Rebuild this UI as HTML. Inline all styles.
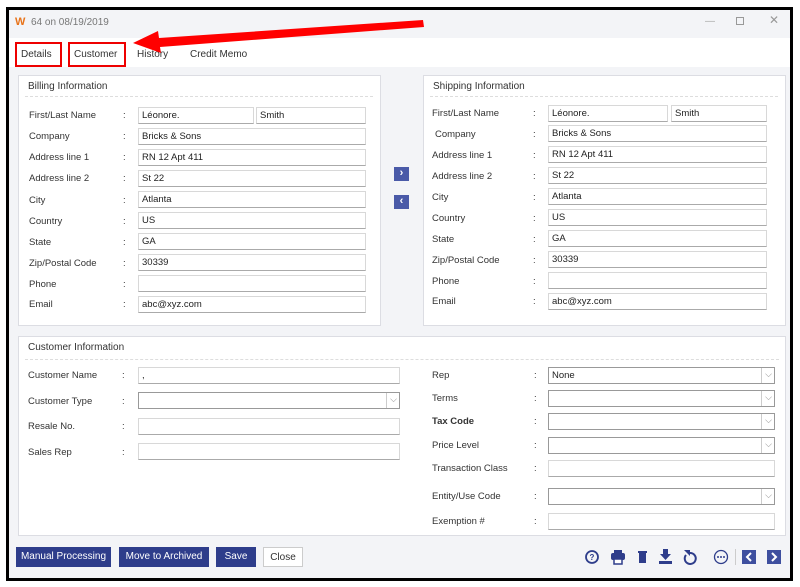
<!DOCTYPE html>
<html><head><meta charset="utf-8"><style>
*{box-sizing:border-box;margin:0;padding:0}
body{width:800px;height:587px;background:#fff;position:relative;overflow:hidden;font-family:"Liberation Sans","DejaVu Sans",sans-serif;font-size:9.5px;color:#333}
.a{position:absolute}
.win{left:6px;top:7px;width:787px;height:574px;border:3px solid #000;background:#f3f4f7}
.title{left:9px;top:10px;width:781px;height:28px;background:#f3f4f7;color:#777;font-size:10px}
.tabs{left:9px;top:38px;width:781px;height:29px;background:#fff}
.tab{font-size:10px;color:#333;top:49px}
.panel{background:#fff;border:1px solid #dcdde3}
.ph{font-size:10px;color:#333}
.dash{border-top:1px dashed #ddd;height:0}
.l{font-size:9.5px;color:#333;white-space:nowrap}
.c{font-size:9.5px;color:#333}
.i{background:#fff;border:1px solid #d8d8d8;border-bottom-color:#aaa;height:17px;font-size:9.5px;padding:2px 0 0 3px;color:#222}
.sel:after{content:"⌵";position:absolute;right:2px;top:1px;color:#888;font-size:9px}
.sel{border-color:#999}
.sel:before{content:"";position:absolute;right:12px;top:0;height:15px;border-left:1px solid #ccc}
.btn{background:#2e3d8b;color:#fff;font-size:10px;height:20px;text-align:center;padding-top:4px;top:547px;white-space:nowrap}
.ic{fill:#2e3d8b}
</style></head><body>
<div class="a win"></div>
<div class="a title"><span class="a" style="left:6px;top:6px;color:#e8731a;font-weight:bold;font-size:11px">W</span><span class="a" style="left:22px;top:7px">64 on 08/19/2019</span>
<span class="a" style="left:696px;top:6px;color:#aaa">—</span><span class="a" style="left:727px;top:7px;width:8px;height:8px;border:1px solid #999"></span><span class="a" style="left:760px;top:3px;color:#999;font-size:12px">✕</span></div>
<div class="a tabs"></div>
<span class="a tab" style="left:21px">Details</span>
<span class="a tab" style="left:74px">Customer</span>
<span class="a tab" style="left:137px">History</span>
<span class="a tab" style="left:190px">Credit Memo</span>
<div class="a" style="left:15px;top:42px;width:47px;height:25px;border:2px solid #e00"></div>
<div class="a" style="left:68px;top:42px;width:58px;height:25px;border:2px solid #e00"></div>
<svg class="a" style="left:0;top:0" width="800" height="587"><polygon points="423,20 424,27 160,47 161,53 133,43 158,31 159,38" fill="#f00"/></svg>

<div class="a panel" style="left:18px;top:75px;width:363px;height:251px"></div>
<div class="a ph" style="left:28px;top:81px">Billing Information</div>
<div class="a dash" style="left:25px;top:96px;width:348px"></div>
<div class="a panel" style="left:423px;top:75px;width:363px;height:251px"></div>
<div class="a ph" style="left:433px;top:81px">Shipping Information</div>
<div class="a dash" style="left:430px;top:96px;width:348px"></div>

<div class="a l" style="left:29px;top:110px">First/Last Name</div><div class="a c" style="left:123px;top:110px">:</div><div class="a i" style="left:138px;top:107px;width:116px">Léonore.</div><div class="a i" style="left:256px;top:107px;width:110px">Smith</div>
<div class="a l" style="left:29px;top:131px">Company</div><div class="a c" style="left:123px;top:131px">:</div><div class="a i" style="left:138px;top:128px;width:228px">Bricks &amp; Sons</div>
<div class="a l" style="left:29px;top:152px">Address line 1</div><div class="a c" style="left:123px;top:152px">:</div><div class="a i" style="left:138px;top:149px;width:228px">RN 12 Apt 411</div>
<div class="a l" style="left:29px;top:173px">Address line 2</div><div class="a c" style="left:123px;top:173px">:</div><div class="a i" style="left:138px;top:170px;width:228px">St 22</div>
<div class="a l" style="left:29px;top:195px">City</div><div class="a c" style="left:123px;top:195px">:</div><div class="a i" style="left:138px;top:191px;width:228px">Atlanta</div>
<div class="a l" style="left:29px;top:216px">Country</div><div class="a c" style="left:123px;top:216px">:</div><div class="a i" style="left:138px;top:212px;width:228px">US</div>
<div class="a l" style="left:29px;top:237px">State</div><div class="a c" style="left:123px;top:237px">:</div><div class="a i" style="left:138px;top:233px;width:228px">GA</div>
<div class="a l" style="left:29px;top:258px">Zip/Postal Code</div><div class="a c" style="left:123px;top:258px">:</div><div class="a i" style="left:138px;top:254px;width:228px">30339</div>
<div class="a l" style="left:29px;top:279px">Phone</div><div class="a c" style="left:123px;top:279px">:</div><div class="a i" style="left:138px;top:275px;width:228px"></div>
<div class="a l" style="left:29px;top:299px">Email</div><div class="a c" style="left:123px;top:299px">:</div><div class="a i" style="left:138px;top:296px;width:228px">abc@xyz.com</div>

<div class="a" style="left:394px;top:167px;width:15px;height:14px;background:#4a5aa8;color:#fff;font-size:11px;text-align:center;font-weight:bold;line-height:13px">›</div>
<div class="a" style="left:394px;top:195px;width:15px;height:14px;background:#4a5aa8;color:#fff;font-size:11px;text-align:center;font-weight:bold;line-height:13px">‹</div>

<div class="a l" style="left:432px;top:108px">First/Last Name</div><div class="a c" style="left:533px;top:108px">:</div><div class="a i" style="left:548px;top:105px;width:120px">Léonore.</div><div class="a i" style="left:671px;top:105px;width:96px">Smith</div>
<div class="a l" style="left:435px;top:129px">Company</div><div class="a c" style="left:533px;top:129px">:</div><div class="a i" style="left:548px;top:125px;width:219px">Bricks &amp; Sons</div>
<div class="a l" style="left:432px;top:150px">Address line 1</div><div class="a c" style="left:533px;top:150px">:</div><div class="a i" style="left:548px;top:146px;width:219px">RN 12 Apt 411</div>
<div class="a l" style="left:432px;top:171px">Address line 2</div><div class="a c" style="left:533px;top:171px">:</div><div class="a i" style="left:548px;top:167px;width:219px">St 22</div>
<div class="a l" style="left:432px;top:192px">City</div><div class="a c" style="left:533px;top:192px">:</div><div class="a i" style="left:548px;top:188px;width:219px">Atlanta</div>
<div class="a l" style="left:432px;top:213px">Country</div><div class="a c" style="left:533px;top:213px">:</div><div class="a i" style="left:548px;top:209px;width:219px">US</div>
<div class="a l" style="left:432px;top:234px">State</div><div class="a c" style="left:533px;top:234px">:</div><div class="a i" style="left:548px;top:230px;width:219px">GA</div>
<div class="a l" style="left:432px;top:255px">Zip/Postal Code</div><div class="a c" style="left:533px;top:255px">:</div><div class="a i" style="left:548px;top:251px;width:219px">30339</div>
<div class="a l" style="left:432px;top:276px">Phone</div><div class="a c" style="left:533px;top:276px">:</div><div class="a i" style="left:548px;top:272px;width:219px"></div>
<div class="a l" style="left:432px;top:296px">Email</div><div class="a c" style="left:533px;top:296px">:</div><div class="a i" style="left:548px;top:293px;width:219px">abc@xyz.com</div>

<div class="a panel" style="left:18px;top:336px;width:768px;height:200px"></div>
<div class="a ph" style="left:28px;top:342px">Customer Information</div>
<div class="a dash" style="left:25px;top:359px;width:754px"></div>
<div class="a l" style="left:28px;top:370px">Customer Name</div><div class="a c" style="left:122px;top:370px">:</div><div class="a i" style="left:138px;top:367px;width:262px">,</div>
<div class="a l" style="left:28px;top:396px">Customer Type</div><div class="a c" style="left:122px;top:396px">:</div><div class="a i sel" style="left:138px;top:392px;width:262px"></div>
<div class="a l" style="left:28px;top:421px">Resale No.</div><div class="a c" style="left:122px;top:421px">:</div><div class="a i" style="left:138px;top:418px;width:262px"></div>
<div class="a l" style="left:28px;top:447px">Sales Rep</div><div class="a c" style="left:122px;top:447px">:</div><div class="a i" style="left:138px;top:443px;width:262px"></div>

<div class="a l" style="left:432px;top:370px">Rep</div><div class="a c" style="left:534px;top:370px">:</div><div class="a i sel" style="left:548px;top:367px;width:227px">None</div>
<div class="a l" style="left:432px;top:393px">Terms</div><div class="a c" style="left:534px;top:393px">:</div><div class="a i sel" style="left:548px;top:390px;width:227px"></div>
<div class="a l" style="left:432px;top:416px;font-weight:bold">Tax Code</div><div class="a c" style="left:534px;top:416px">:</div><div class="a i sel" style="left:548px;top:413px;width:227px"></div>
<div class="a l" style="left:432px;top:440px">Price Level</div><div class="a c" style="left:534px;top:440px">:</div><div class="a i sel" style="left:548px;top:437px;width:227px"></div>
<div class="a l" style="left:432px;top:463px">Transaction Class</div><div class="a c" style="left:534px;top:463px">:</div><div class="a i" style="left:548px;top:460px;width:227px"></div>
<div class="a l" style="left:432px;top:491px">Entity/Use Code</div><div class="a c" style="left:534px;top:491px">:</div><div class="a i sel" style="left:548px;top:488px;width:227px"></div>
<div class="a l" style="left:432px;top:516px">Exemption #</div><div class="a c" style="left:534px;top:516px">:</div><div class="a i" style="left:548px;top:513px;width:227px"></div>

<div class="a btn" style="left:16px;width:95px">Manual Processing</div>
<div class="a btn" style="left:119px;width:90px">Move to Archived</div>
<div class="a btn" style="left:216px;width:40px">Save</div>
<div class="a btn" style="left:263px;width:40px;background:#fff;color:#333;border:1px solid #ccc">Close</div>

<svg class="a" style="left:580px;top:545px" width="210" height="24">
<circle cx="12" cy="12" r="6" fill="none" stroke="#2e3d8b" stroke-width="1.8"/><text x="9.5" y="15" font-size="8" font-weight="bold" fill="#2e3d8b" font-family="Liberation Sans">?</text>
<g class="ic"><rect x="34" y="5" width="8" height="3"/><rect x="31" y="8" width="14" height="7" rx="2"/><rect x="34" y="14" width="8" height="5" fill="#fff" stroke="#2e3d8b" stroke-width="1.5"/></g>
<g class="ic"><rect x="58" y="6" width="9" height="2"/><rect x="59" y="8" width="7" height="10"/></g>
<g class="ic"><rect x="79" y="16" width="13" height="3"/><polygon points="83,4 88,4 88,9 91,9 85.5,15 80,9 83,9"/></g>
<path d="M110 8 A5.5 5.5 0 1 1 106 10" fill="none" stroke="#2e3d8b" stroke-width="2"/><polygon points="104,5 110,5 110,11" fill="#2e3d8b"/>
<circle cx="141" cy="12" r="6.5" fill="none" stroke="#2e3d8b" stroke-width="1.3"/><circle cx="138" cy="12" r="1" fill="#2e3d8b"/><circle cx="141" cy="12" r="1" fill="#2e3d8b"/><circle cx="144" cy="12" r="1" fill="#2e3d8b"/>
<rect x="155" y="4" width="1" height="16" fill="#ccc"/>
<rect x="162" y="5" width="14" height="14" fill="#3e4f9f"/><path d="M171 8 L167 12 L171 16" stroke="#fff" stroke-width="2" fill="none"/>
<rect x="187" y="5" width="14" height="14" fill="#3e4f9f"/><path d="M192 8 L196 12 L192 16" stroke="#fff" stroke-width="2" fill="none"/>
</svg>
</body></html>
